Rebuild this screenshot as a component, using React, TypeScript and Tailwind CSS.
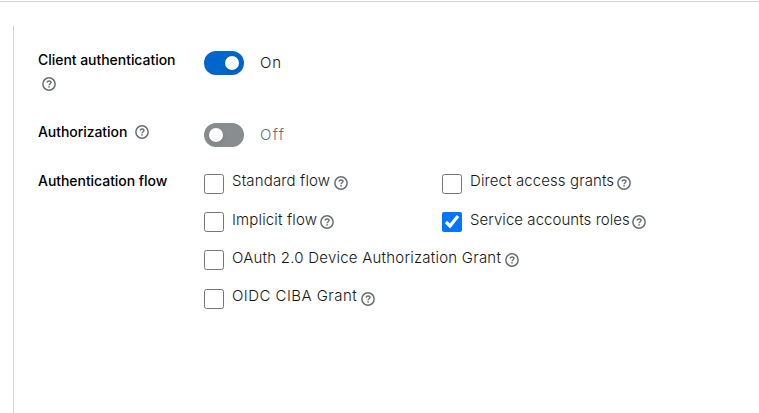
function Help({ className = "" }: { className?: string }) {
  return (
    <button type="button" aria-label="Help" className={`shrink-0 text-[#6a6e73] ${className}`}>
      <svg viewBox="0 0 14 14" fill="none" stroke="currentColor" className="block size-[14px] overflow-visible">
        <circle cx="7" cy="7" r="6.15" strokeWidth="1.5" />
        <path d="M5 5.5C5.3 4.5 6 4 7 4c1.200 0 2 .65 2 1.600C9 6.700 7.100 6.800 7.100 8.200" strokeWidth="1.400" />
        <circle cx="7.050" cy="9.850" r=".85" fill="currentColor" stroke="none" />
      </svg>
    </button>
  );
}

function Toggle({ on }: { on: boolean }) {
  return (
    <span
      role="switch"
      aria-checked={on}
      className={`flex h-6 w-10 shrink-0 items-center rounded-full px-[5px] ${on ? "justify-end bg-[#0066cc]" : "justify-start bg-[#8a8d90]"}`}
    >
      <span className="size-[14px] rounded-full bg-white shadow-[0_2px_4px_rgba(3,3,3,0.12)]" />
    </span>
  );
}

type FlowProps = { label: string; checked?: boolean; text?: string; help?: string };

function Flow({ label, checked = false, text = "-mt-1", help = "ml-1" }: FlowProps) {
  return (
    <label className="flex h-5 items-center">
      <input type="checkbox" defaultChecked={checked} className="size-5 shrink-0" />
      <span className={`ml-2 whitespace-nowrap font-light ${text}`}>{label}</span>
      <Help className={help} />
    </label>
  );
}

export default function App() {
  return (
    <div className="h-[413px] w-[759px] overflow-hidden bg-white pt-px font-['Inter','Noto_Sans',sans-serif] text-[15px] leading-5 text-[#151515]">
      <div className="h-px bg-[#d2d2d2]" />
      <form className="ml-[13px] mt-6 h-[387px] border-l border-[#d2d2d2] pl-6 pt-[25px]">
        <div className="flex h-[72px]">
          <div className="w-[166px] text-sm font-medium text-black">
            <div className="-mt-px whitespace-nowrap tracking-[-0.04px]">Client authentication</div>
            <Help className="ml-1 mt-[7px]" />
          </div>
          <div className="flex h-6 items-center gap-4 font-light">
            <Toggle on />
            <span className="tracking-[0.8px]">On</span>
          </div>
        </div>
        <div className="flex h-[51px]">
          <div className="flex h-5 w-[166px] items-center text-sm font-medium text-black">
            <span className="-mt-[2px] tracking-[-0.06px]">Authorization</span>
            <Help className="-mt-[3px] ml-2" />
          </div>
          <div className="flex h-6 items-center gap-4 font-light text-[#6a6e73]">
            <Toggle on={false} />
            <span className="tracking-[1.3px]">Off</span>
          </div>
        </div>
        <div className="flex">
          <div className="-mt-[3px] w-[166px] whitespace-nowrap text-sm font-medium tracking-[-0.05px] text-black">
            Authentication flow
          </div>
          <div className="grid grid-cols-[238px_260px] gap-y-[18px]">
            <Flow label="Standard flow" text="-mt-1.5 tracking-[0.15px]" help="-mt-0.5 ml-1" />
            <Flow label="Direct access grants" text="-mt-1.5 tracking-[0.1px]" help="-mt-0.5 ml-[3px]" />
            <Flow label="Implicit flow" text="-mt-1 tracking-[0.15px]" help="ml-[3px]" />
            <Flow label="Service accounts roles" checked text="-mt-1 tracking-[0.05px]" help="ml-[2px]" />
            <div className="col-span-2">
              <Flow label="OAuth 2.0 Device Authorization Grant" text="-mt-1 tracking-[0.23px]" />
            </div>
            <div className="col-span-2 mt-px">
              <Flow label="OIDC CIBA Grant" text="-mt-1.5 tracking-[0.46px]" />
            </div>
          </div>
        </div>
      </form>
    </div>
  );
}
